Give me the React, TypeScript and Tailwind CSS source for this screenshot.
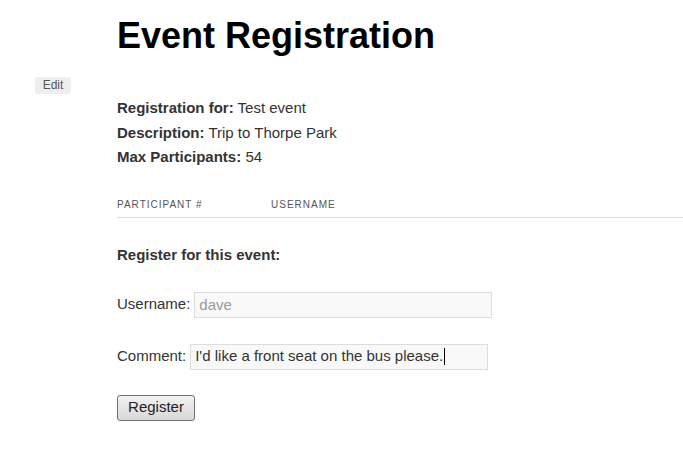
import * as React from "react";

const details = [
  { label: "Registration for:", value: "Test event" },
  { label: "Description:", value: "Trip to Thorpe Park" },
  { label: "Max Participants:", value: "54" },
];

export default function App() {
  return (
    <div className="min-h-[472px] bg-white font-['Liberation_Sans',Arial,sans-serif] text-[#333]">
      <div className="pl-[117px] pt-[14px]">
        <h1 className="text-[36px] font-bold leading-[44px] text-black">Event Registration</h1>
      </div>

      <div className="pl-[35px] pt-[14px]">
        <button className="h-[17px] w-[36px] rounded-[3px] bg-[#eee] text-[12px] leading-[17px] text-[#555]">
          Edit
        </button>
      </div>

      <div className="pl-[117px]">
        <div>
          {details.map((d) => (
            <p key={d.label} className="text-[15px] leading-[24.5px]">
              <span className="font-bold">{d.label}</span> {d.value}
            </p>
          ))}
        </div>

        <div className="mt-[29px] flex border-b border-[#ddd] pb-[6px] text-[10px] uppercase leading-[12px] tracking-[1px] text-[#555]">
          <span className="w-[154px]">Participant #</span>
          <span>Username</span>
        </div>

        <h3 className="mt-[28px] text-[15px] font-bold leading-[17px]">Register for this event:</h3>

        <div className="mt-[29px] flex items-center">
          <label className="text-[15px]">Username:</label>
          <input
            placeholder="dave"
            className="ml-[4px] h-[26px] w-[298px] border border-[#ddd] bg-[#f9f9f9] px-[4px] text-[15px] text-[#333] placeholder:text-[#999] outline-none"
          />
        </div>

        <div className="mt-[26px] flex items-center">
          <label className="text-[15px]">Comment:</label>
          <div className="ml-[4px] flex h-[26px] w-[298px] items-center border border-[#ddd] bg-[#f9f9f9] px-[4px] text-[15px] text-[#333]">
            I'd like a front seat on the bus please.
            <span className="ml-px inline-block h-[17px] w-px bg-black" />
          </div>
        </div>

        <div className="mt-[25px]">
          <button className="h-[26px] w-[78px] rounded-[3px] border border-[#707070] bg-gradient-to-b from-[#f2f2f2] to-[#d8d8d8] text-[15px] text-[#222]">
            Register
          </button>
        </div>
      </div>
    </div>
  );
}
